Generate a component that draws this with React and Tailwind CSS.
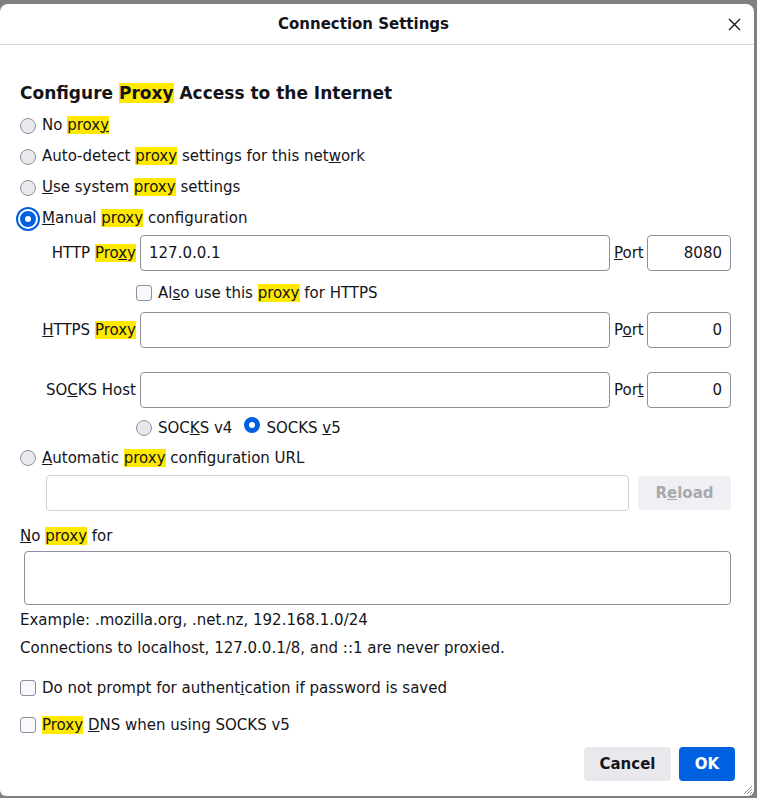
import React from "react";

const Hl = ({ children }) => <span className="bg-[#ffe900]">{children}</span>;
const U = ({ children }) => <span className="underline decoration-1">{children}</span>;

const Radio = ({ checked, focused }) => {
  if (checked) {
    return (
      <span
        className={`inline-block w-4 h-4 shrink-0 rounded-full border-[5px] border-[#0060df] bg-white ${
          focused ? "outline-2 outline-offset-[2px] outline-[#0060df]" : ""
        }`}
      />
    );
  }
  return <span className="inline-block w-4 h-4 shrink-0 rounded-full border border-[#8f8f9d] bg-[#e9e9ed]" />;
};

const Checkbox = () => (
  <span className="inline-block w-4 h-4 shrink-0 rounded-[3px] border border-[#8f8f9d] bg-[#f9f9fb]" />
);

const Field = ({ value = "", className = "", right = false }) => (
  <input
    readOnly
    value={value}
    className={`h-[36px] rounded-[4px] border border-[#8f8f9d] bg-white px-[8px] outline-none ${
      right ? "text-right" : ""
    } ${className}`}
  />
);

const ProxyRow = ({ label, port, value, portValue, className = "" }) => (
  <div className={`flex items-center h-[36px] ${className}`}>
    <span className="w-[116px] text-right whitespace-nowrap">{label}</span>
    <Field value={value} className="ml-[4px] w-[470px]" />
    <span className="ml-[4px] w-[30px] whitespace-nowrap">{port}</span>
    <Field value={portValue} right className="ml-[3px] w-[84px]" />
  </div>
);

export default function App() {
  return (
    <div className="w-[757px] h-[798px] bg-[#808080] pt-[4px] font-['DejaVu_Sans',sans-serif] text-[15px] text-[#15141a]">
      <div className="relative w-[754px] h-[792px] bg-white rounded-t-[8px] rounded-b-[6px]">
        {/* header */}
        <div className="flex items-center h-[41px] border-b border-[#d7d7db]">
          <span className="w-[727px] text-center font-bold">Connection Settings</span>
          <svg width="13" height="13" viewBox="0 0 13 13" className="ml-[1px]">
            <path d="M1 1 L12 12 M12 1 L1 12" stroke="#15141a" strokeWidth="1.3" fill="none" />
          </svg>
        </div>

        <div className="px-[20px]">
          <div className="mt-[36px] h-[24px] leading-[24px] text-[17px] font-bold">
            Configure <Hl>Proxy</Hl> Access to the Internet
          </div>

          <div className="mt-[5px]">
            <div className="flex items-center gap-[6px] h-[31px]">
              <Radio />
              <span>
                No <Hl>prox<U>y</U></Hl>
              </span>
            </div>
            <div className="flex items-center gap-[6px] h-[31px]">
              <Radio />
              <span>
                Auto-detect <Hl>proxy</Hl> settings for this net<U>w</U>ork
              </span>
            </div>
            <div className="flex items-center gap-[6px] h-[31px]">
              <Radio />
              <span>
                <U>U</U>se system <Hl>proxy</Hl> settings
              </span>
            </div>
            <div className="flex items-center gap-[6px] h-[31px]">
              <Radio checked focused />
              <span>
                <U>M</U>anual <Hl>proxy</Hl> configuration
              </span>
            </div>
          </div>

          <ProxyRow
            className="mt-[1px]"
            label={
              <>
                HTTP <Hl>Pro<U>x</U>y</Hl>
              </>
            }
            value="127.0.0.1"
            port={
              <>
                <U>P</U>ort
              </>
            }
            portValue="8080"
          />

          <div className="flex items-center gap-[6px] h-[22px] mt-[11px] ml-[116px]">
            <Checkbox />
            <span>
              Al<U>s</U>o use this <Hl>proxy</Hl> for HTTPS
            </span>
          </div>

          <ProxyRow
            className="mt-[8px]"
            label={
              <>
                <U>H</U>TTPS <Hl>Proxy</Hl>
              </>
            }
            port={
              <>
                P<U>o</U>rt
              </>
            }
            portValue="0"
          />

          <ProxyRow
            className="mt-[24px]"
            label={
              <>
                SO<U>C</U>KS Host
              </>
            }
            port={
              <>
                Por<U>t</U>
              </>
            }
            portValue="0"
          />

          <div className="flex items-center h-[22px] mt-[9px] ml-[116px]">
            <Radio />
            <span className="ml-[6px]">
              SOC<U>K</U>S v4
            </span>
            <span className="ml-[12px]">
              <Radio checked />
            </span>
            <span className="ml-[6px]">
              SOCKS <U>v</U>5
            </span>
          </div>

          <div className="flex items-center gap-[6px] h-[22px] mt-[8px]">
            <Radio />
            <span>
              <U>A</U>utomatic <Hl>proxy</Hl> configuration URL
            </span>
          </div>

          <div className="flex items-center mt-[6px]">
            <Field className="ml-[26px] w-[583px] border-[#cfcfd8]" />
            <button className="ml-[9px] w-[93px] h-[34px] rounded-[4px] bg-[#f0f0f4] font-bold text-[#a9a9ad]">
              R<U>e</U>load
            </button>
          </div>

          <div className="flex items-center h-[22px] mt-[14px]">
            <span>
              <U>N</U>o <Hl>proxy</Hl> for
            </span>
          </div>

          <div className="mt-[4px] ml-[4px] w-[707px] h-[54px] rounded-[4px] border border-[#8f8f9d]" />

          <div className="h-[22px] leading-[22px] mt-[4px]">Example: .mozilla.org, .net.nz, 192.168.1.0/24</div>
          <div className="h-[22px] leading-[22px] mt-[6px]">
            Connections to localhost, 127.0.0.1/8, and ::1 are never proxied.
          </div>

          <div className="flex items-center gap-[6px] h-[22px] mt-[18px]">
            <Checkbox />
            <span>
              Do not prompt for authent<U>i</U>cation if password is saved
            </span>
          </div>
          <div className="flex items-center gap-[6px] h-[22px] mt-[15px]">
            <Checkbox />
            <span>
              <Hl>Proxy</Hl> <U>D</U>NS when using SOCKS v5
            </span>
          </div>

          <div className="flex justify-end gap-[8px] mt-[11px] -mr-[1px]">
            <button className="w-[87px] h-[34px] rounded-[4px] bg-[#e9e9ed] font-bold">Cancel</button>
            <button className="w-[56px] h-[34px] rounded-[4px] bg-[#0061e0] font-bold text-white">OK</button>
          </div>
        </div>

        <svg width="10" height="10" viewBox="0 0 10 10" className="absolute right-[1px] bottom-[1px]">
          <path d="M9 1 L1 9 M9 4 L4 9 M9 7 L7 9" stroke="#8f8f9d" strokeWidth="1" fill="none" />
        </svg>
      </div>
    </div>
  );
}
